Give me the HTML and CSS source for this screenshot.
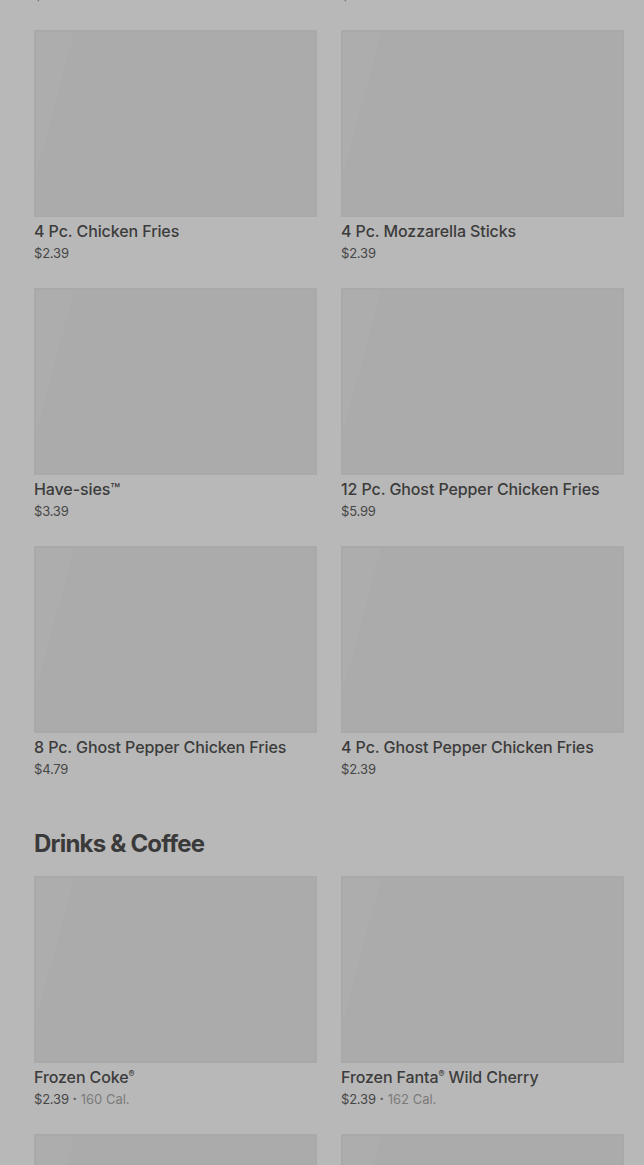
FILE: index.html
```html
<!DOCTYPE html>
<html lang="en">
<head>
<meta charset="utf-8">
<title>Menu</title>
<link rel="stylesheet" href="styles.css">
</head>
<body>
<main class="menu">
  <section class="section section--cut">
    <div class="grid">
      <article class="card"><div class="thumb"></div><h3 class="name">Chicken Fries</h3><p class="meta"><span class="price">$5.39</span></p></article>
      <article class="card"><div class="thumb"></div><h3 class="name">Mozzarella Sticks</h3><p class="meta"><span class="price">$4.79</span></p></article>
      <article class="card"><div class="thumb"></div><h3 class="name">4 Pc. Chicken Fries</h3><p class="meta"><span class="price">$2.39</span></p></article>
      <article class="card"><div class="thumb"></div><h3 class="name">4 Pc. Mozzarella Sticks</h3><p class="meta"><span class="price">$2.39</span></p></article>
      <article class="card"><div class="thumb"></div><h3 class="name">Have-sies™</h3><p class="meta"><span class="price">$3.39</span></p></article>
      <article class="card"><div class="thumb"></div><h3 class="name">12 Pc. Ghost Pepper Chicken Fries</h3><p class="meta"><span class="price">$5.99</span></p></article>
      <article class="card"><div class="thumb"></div><h3 class="name">8 Pc. Ghost Pepper Chicken Fries</h3><p class="meta"><span class="price">$4.79</span></p></article>
      <article class="card"><div class="thumb"></div><h3 class="name">4 Pc. Ghost Pepper Chicken Fries</h3><p class="meta"><span class="price">$2.39</span></p></article>
    </div>
  </section>
  <section class="section">
    <h2 class="section-title">Drinks &amp; Coffee</h2>
    <div class="grid">
      <article class="card"><div class="thumb"></div><h3 class="name">Frozen Coke<sup>®</sup></h3><p class="meta"><span class="price">$2.39</span><span class="dot">•</span><span class="cal">160 Cal.</span></p></article>
      <article class="card"><div class="thumb"></div><h3 class="name">Frozen Fanta<sup>®</sup> Wild Cherry</h3><p class="meta"><span class="price">$2.39</span><span class="dot">•</span><span class="cal">162 Cal.</span></p></article>
      <article class="card"><div class="thumb"></div><h3 class="name">Coke<sup>®</sup></h3><p class="meta"><span class="price">$2.19</span></p></article>
      <article class="card"><div class="thumb"></div><h3 class="name">Diet Coke<sup>®</sup></h3><p class="meta"><span class="price">$2.19</span></p></article>
    </div>
  </section>
</main>
</body>
</html>
```

FILE: styles.css
```css
* { box-sizing: border-box; }
html, body { margin: 0; padding: 0; }
body {
  background: #b8b8b8;
  font-family: Inter, "Noto Sans", sans-serif;
  color: #3b3b3b;
  overflow: hidden;
}
.menu {
  padding: 0 20px 0 34px;
  margin-top: -228px;
}
.section--cut { margin-bottom: 48px; }
.grid {
  display: grid;
  grid-template-columns: 1fr 1fr;
  column-gap: 24px;
  row-gap: 25px;
}
.card { min-width: 0; }
.thumb {
  height: 187px;
  background-color: #ababab;
  background-image: linear-gradient(105deg, rgba(255,255,255,0.025) 0, rgba(255,255,255,0.025) 12%, rgba(255,255,255,0) 12.5%);
  box-shadow: inset 0 0 0 2px #a9a9a9;
}
.name {
  margin: 2px 0 0;
  font-size: 16px;
  line-height: 24px;
  font-weight: 500;
  color: #3c3c3c;
  letter-spacing: -0.1px;
  white-space: nowrap;
}
.name sup {
  font-size: 9px;
  line-height: 0;
  vertical-align: 6px;
}
.meta {
  margin: 0;
  font-size: 13px;
  line-height: 20px;
  color: #464646;
  display: flex;
  align-items: center;
}
.price { letter-spacing: -0.2px; }
.dot {
  font-size: 7px;
  margin: 0 4px;
  color: #5a5a5a;
}
.cal { color: #7b7b7b; }
.section-title {
  margin: 0 0 16px;
  padding-top: 1px;
  font-size: 24px;
  line-height: 32px;
  font-weight: 700;
  letter-spacing: -0.8px;
  color: #3a3a3a;
}
```
